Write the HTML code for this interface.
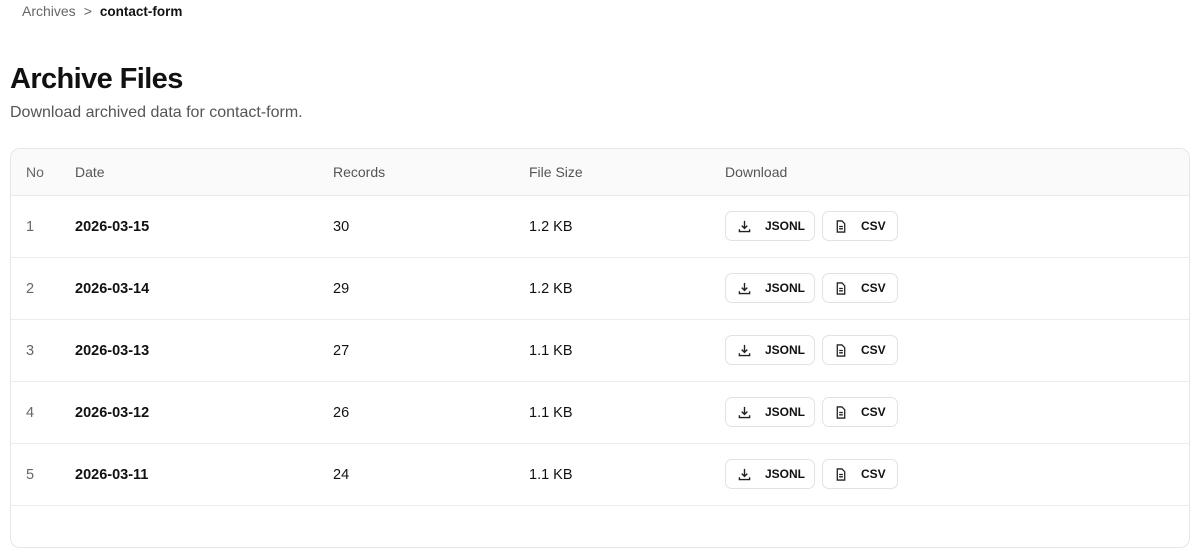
<!DOCTYPE html>
<html><head><style>
*{box-sizing:border-box;margin:0;padding:0}
html,body{width:1200px;height:515px;overflow:hidden}
body{background:#fff;font-family:"Liberation Sans",sans-serif;color:#111}
.bc{position:absolute;left:22px;top:3px;font-size:14px;color:#666}
.bc b{color:#111;font-weight:bold;margin-left:4px;font-size:13.5px}
.bc span{margin:0 4px 0 8px}
h1{position:absolute;left:10px;top:63px;font-size:29px;font-weight:bold;letter-spacing:-0.6px}
.sub{position:absolute;left:10px;top:104px;font-size:16px;color:#555}
.tbl{position:absolute;left:10px;top:148px;width:1180px;height:400px;border:1px solid #e6e6e6;border-radius:10px;overflow:hidden}
.hd{height:47px;background:#fafafa;border-bottom:1px solid #e8e8e8;position:relative;font-size:14px;color:#555}
.row{height:62px;border-bottom:1px solid #ececec;position:relative;font-size:14.5px}
.c{position:absolute;top:50%;transform:translateY(-50%)}
.no{left:15px;color:#666}.d{left:64px;font-weight:bold}.r{left:322px}.s{left:518px}
.btn{position:absolute;top:15px;height:30px;border:1px solid #e2e2e2;border-radius:7px;font-size:12px;font-weight:bold;display:flex;align-items:center;background:#fff}
.j{left:714px;width:90px}.v{left:811px;width:76px}
.btn svg{margin-left:12px;margin-right:14px}
</style></head><body>
<div class="bc">Archives<span>&gt;</span><b>contact-form</b></div>
<h1>Archive Files</h1>
<div class="sub">Download archived data for contact-form.</div>
<div class="tbl">
<div class="hd"><div class="c no">No</div><div class="c" style="left:64px">Date</div><div class="c r">Records</div><div class="c s">File Size</div><div class="c" style="left:714px">Download</div></div>
<div class="row"><div class="c no">1</div><div class="c d">2026-03-15</div><div class="c r">30</div><div class="c s">1.2 KB</div>
<div class="btn j"><svg width="13" height="13" viewBox="0 0 14 14" fill="none" stroke="#222" stroke-width="1.5"><path d="M7 1v8M4 6l3 3 3-3M1.5 10v2.5h11V10"/></svg>JSONL</div>
<div class="btn v"><svg width="12" height="13" viewBox="0 0 12 14" fill="none" stroke="#222" stroke-width="1.4"><path d="M2 1h5l3 3v9H2z M4 7h4M4 9.5h4"/></svg>CSV</div></div>
<div class="row"><div class="c no">2</div><div class="c d">2026-03-14</div><div class="c r">29</div><div class="c s">1.2 KB</div>
<div class="btn j"><svg width="13" height="13" viewBox="0 0 14 14" fill="none" stroke="#222" stroke-width="1.5"><path d="M7 1v8M4 6l3 3 3-3M1.5 10v2.5h11V10"/></svg>JSONL</div>
<div class="btn v"><svg width="12" height="13" viewBox="0 0 12 14" fill="none" stroke="#222" stroke-width="1.4"><path d="M2 1h5l3 3v9H2z M4 7h4M4 9.5h4"/></svg>CSV</div></div>
<div class="row"><div class="c no">3</div><div class="c d">2026-03-13</div><div class="c r">27</div><div class="c s">1.1 KB</div>
<div class="btn j"><svg width="13" height="13" viewBox="0 0 14 14" fill="none" stroke="#222" stroke-width="1.5"><path d="M7 1v8M4 6l3 3 3-3M1.5 10v2.5h11V10"/></svg>JSONL</div>
<div class="btn v"><svg width="12" height="13" viewBox="0 0 12 14" fill="none" stroke="#222" stroke-width="1.4"><path d="M2 1h5l3 3v9H2z M4 7h4M4 9.5h4"/></svg>CSV</div></div>
<div class="row"><div class="c no">4</div><div class="c d">2026-03-12</div><div class="c r">26</div><div class="c s">1.1 KB</div>
<div class="btn j"><svg width="13" height="13" viewBox="0 0 14 14" fill="none" stroke="#222" stroke-width="1.5"><path d="M7 1v8M4 6l3 3 3-3M1.5 10v2.5h11V10"/></svg>JSONL</div>
<div class="btn v"><svg width="12" height="13" viewBox="0 0 12 14" fill="none" stroke="#222" stroke-width="1.4"><path d="M2 1h5l3 3v9H2z M4 7h4M4 9.5h4"/></svg>CSV</div></div>
<div class="row"><div class="c no">5</div><div class="c d">2026-03-11</div><div class="c r">24</div><div class="c s">1.1 KB</div>
<div class="btn j"><svg width="13" height="13" viewBox="0 0 14 14" fill="none" stroke="#222" stroke-width="1.5"><path d="M7 1v8M4 6l3 3 3-3M1.5 10v2.5h11V10"/></svg>JSONL</div>
<div class="btn v"><svg width="12" height="13" viewBox="0 0 12 14" fill="none" stroke="#222" stroke-width="1.4"><path d="M2 1h5l3 3v9H2z M4 7h4M4 9.5h4"/></svg>CSV</div></div>
</div>
</body></html>
